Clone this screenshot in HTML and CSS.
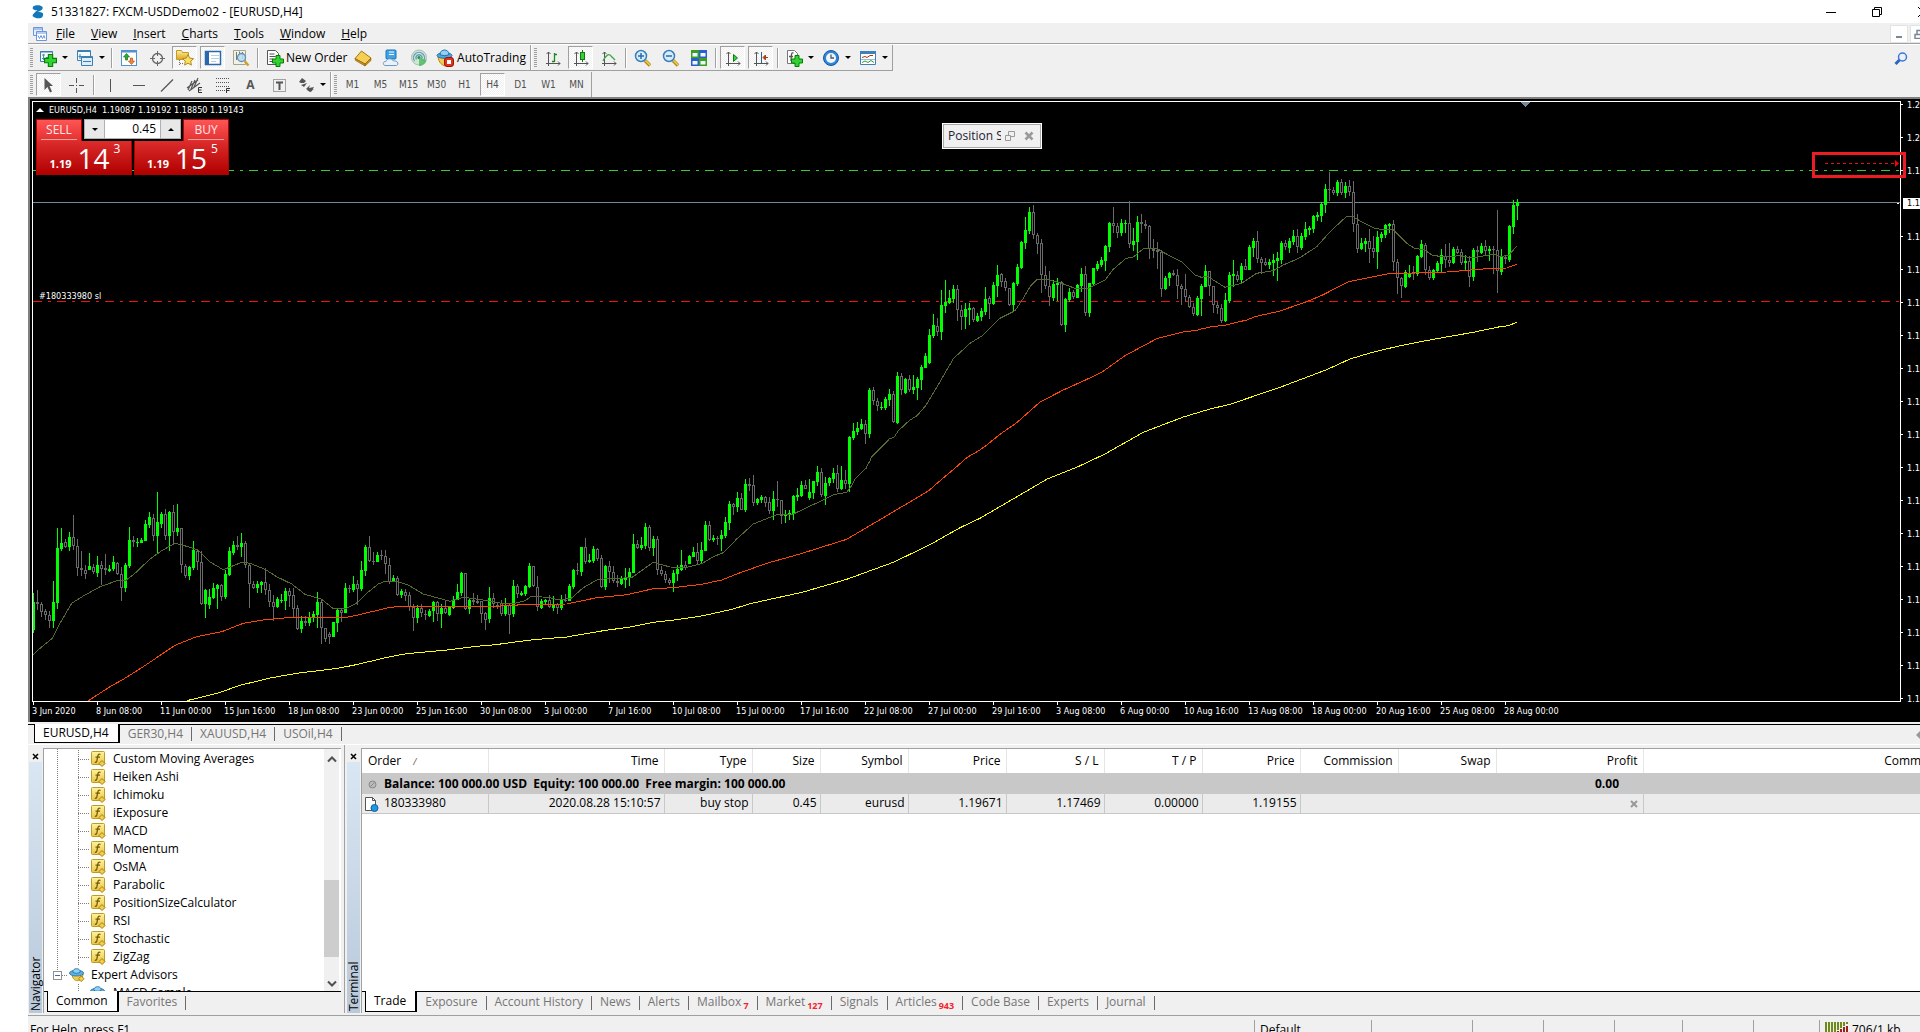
FILE: index.html
```html
<!DOCTYPE html>
<html lang="en">
<head>
<meta charset="utf-8">
<title>51331827: FXCM-USDDemo02 - [EURUSD,H4]</title>
<link rel="stylesheet" href="styles.css">
</head>
<body>
<svg class="defs" aria-hidden="true">
  <defs>
    <linearGradient id="g-gold" x1="0" y1="0" x2="0" y2="1"><stop offset="0" stop-color="#fdf0a0"/><stop offset="1" stop-color="#dba520"/></linearGradient>
    <linearGradient id="g-func" x1="0" y1="0" x2="0" y2="1"><stop offset="0" stop-color="#fdf3a0"/><stop offset="1" stop-color="#e8c548"/></linearGradient>
  </defs>
  <symbol id="plus" viewBox="0 0 12 12"><path d="M4 .5h4V4h3.500v4H8v3.500H4V8H.5V4H4z" fill="#2fd52f" stroke="#0b7a0b"/></symbol>
  <symbol id="func" viewBox="0 0 16 16">
    <rect x="1.500" y=".5" width="13" height="13" rx="1" fill="url(#g-func)" stroke="#c39a1c"/>
    <path d="M10.500 3.500C8.500 2.500 8 4 7.800 5.500L6.800 10c-.3 1.200-1 1.500-2 1M5.500 6.200h4.500" fill="none" stroke="#7a5c00" stroke-width="1.300"/>
    <path d="M12 9.500l3 3-3 3-3-3z" fill="#f2cf4a" stroke="#a87d0a"/>
  </symbol>
  <symbol id="hat" viewBox="0 0 17 16">
    <path d="M3 7c1 5 3 7 6 7s5-2 6-7z" fill="#f0cd50" stroke="#b58b1a"/>
    <ellipse cx="8" cy="6" rx="7.500" ry="3" fill="#5fb0e2" stroke="#2678b0"/>
    <path d="M4 5c0-5 8-5 8 0-2 1.500-6 1.500-8 0z" fill="#8fd0f5" stroke="#2678b0"/>
    <path d="M13 9l3 3-3 3-3-3z" fill="#f2cf4a" stroke="#a87d0a"/>
  </symbol>
</svg>

<div class="app">
  <header class="titlebar">
    <svg class="logo" width="12" height="14" viewBox="0 0 12 14"><path d="M1 1.500C4-.3 9 0 10.500 2 11.500 4 9 6 5.500 7c2.500 0 5 .3 5.500 1.500C11.500 10.500 10.500 12.500 9 13 6 13.800 2.500 13 .5 11 1 8.500 3 7 5.500 5.200 3.500 5.500 1.500 5 .6 3.500z" fill="#1478b8"/></svg>
    <h1 class="title">51331827: FXCM-USDDemo02 - [EURUSD,H4]</h1>
    <div class="wincontrols">
      <button aria-label="Minimize"><svg width="12" height="12"><path d="M1 6.500h10" stroke="#000"/></svg></button>
      <button aria-label="Restore"><svg width="12" height="12"><path d="M1.500 3.500h7v7h-7zM3.500 3V1.500h7v7H9" fill="none" stroke="#000"/></svg></button>
      <button aria-label="Close"><svg width="12" height="12"><path d="M1 1l10 10M11 1L1 11" stroke="#000"/></svg></button>
    </div>
  </header>

  <nav class="menubar">
    <svg class="menuicon" width="14" height="14"><path d="M.5 .5h9v8h-9z" fill="#e6eefb" stroke="#6a96de"/><path d="M.5 2h9" stroke="#6a96de"/><path d="M3.500 4.500h10v9h-10z" fill="#fff" stroke="#6a96de"/><path d="M4 6h9" stroke="#6a96de"/><path d="M5 8.500l1.500 3L8 8.500l1.500 3L11 8.500l1 3" fill="none" stroke="#6a96de"/></svg>
    <button><u>F</u>ile</button><button><u>V</u>iew</button><button><u>I</u>nsert</button><button><u>C</u>harts</button><button><u>T</u>ools</button><button><u>W</u>indow</button><button><u>H</u>elp</button>
    <div class="mdi">
      <button aria-label="Minimize chart"><svg width="10" height="10"><path d="M2 8h6" stroke="#778899" stroke-width="2"/></svg></button>
      <button aria-label="Restore chart"><svg width="10" height="10"><path d="M1 5.500h6v4H1zM3 5V1.500h6v5H7" fill="none" stroke="#778899" stroke-width="1.500"/></svg></button>
      <button aria-label="Close chart"><svg width="10" height="10"><path d="M2 2l6 6M8 2L2 8" stroke="#778899" stroke-width="2"/></svg></button>
    </div>
  </nav>

  <div class="toolbars">
    <div class="toolrow">
      <div class="toolgroup boxed">
        <i class="grip"></i>
        <button class="tool drop" aria-label="New chart"><svg width="18" height="18"><path d="M1.500 2.500h12v10h-12z" fill="#f4fafe" stroke="#3d7fae"/><path d="M1 3h13" stroke="#3d7fae"/><path d="M4.500 5v6M3 6h3M3 9.500h3M7 8.500h3" stroke="#5d88a8"/><use href="#plus" x="5" y="5" width="13" height="13"/></svg><i class="caret"></i></button>
        <button class="tool drop" aria-label="Profiles"><svg width="18" height="18"><path d="M1.500 1.500h13v10h-13z" fill="#f4fafe" stroke="#3d7fae"/><path d="M1 2.500h14M4 5v5M2.500 7.500h5" stroke="#3d7fae"/><path d="M5.500 7.500h11v9h-11z" fill="#dcecf8" stroke="#3d7fae"/><path d="M6 8.500h10M7 12.500h8" stroke="#3d7fae"/></svg><i class="caret"></i></button>
        <i class="sep"></i>
        <button class="tool" aria-label="Market Watch"><svg width="18" height="18"><rect x="1.500" y="1.500" width="15" height="15" fill="#fff" stroke="#4f93cf"/><path d="M1 2.500h16" stroke="#4f93cf" stroke-width="2"/><path d="M6.500 4.500l3 3.500h-2v3h-2V8h-2z" fill="#2bb02b" stroke="#12751a" stroke-width=".7"/><path d="M11.500 15.500l3-3.500h-2V9h-2v3h-2z" fill="#f38a3c" stroke="#c34a10" stroke-width=".7"/></svg></button>
        <button class="tool" aria-label="Data Window"><svg width="18" height="18"><circle cx="9.500" cy="9.500" r="5" fill="none" stroke="#666" stroke-width="1.300"/><path d="M9.500 2v5M9.500 12v5M2 9.500h5M12 9.500h5" stroke="#666"/></svg></button>
        <button class="tool pressed" aria-label="Navigator"><svg width="18" height="18"><path d="M.5 3V1.500h5l1 2h6v7H.5z" fill="url(#g-gold)" stroke="#c59a2a"/><path d="M3.500 11v5M4 14.500h3" stroke="#777" stroke-dasharray="1 1"/><path d="M12 5.500l1.700 3.600 3.800.5-2.800 2.600.7 3.900-3.400-1.900-3.400 1.900.7-3.900-2.800-2.600 3.800-.5z" fill="#f8df68" stroke="#b98a14"/></svg></button>
        <button class="tool pressed" aria-label="Terminal"><svg width="18" height="18"><rect x="1.500" y="2.500" width="15" height="13" fill="#fff" stroke="#2a68ac" stroke-width="1.500"/><path d="M3.500 3v12" stroke="#2a68ac" stroke-width="3"/><path d="M7 6.500h8M7 9.500h8M7 12.500h5" stroke="#b6cfe6"/></svg></button>
        <button class="tool" aria-label="Strategy Tester"><svg width="18" height="18"><path d="M1.500 1.500h12v14h-12z" fill="#f3f0e6" stroke="#a9a28c"/><path d="M4.500 3v8M7.500 2.500v5M10.500 3v7" stroke="#777"/><circle cx="9.500" cy="8.500" r="4" fill="#b9dcf2" fill-opacity=".85" stroke="#5c91b8" stroke-width="1.300"/><path d="M12.500 12l4 4.500" stroke="#cfa030" stroke-width="2.500"/></svg></button>
        <i class="sep"></i>
        <button class="tool wide-order"><svg width="18" height="18"><path d="M1.500 1.500h8l3 3v11h-11z" fill="#fff" stroke="#555"/><path d="M3.500 5h5M3.500 7.500h6M3.500 10h4M3.500 12.500h3" stroke="#555"/><use href="#plus" x="6" y="6" width="12" height="12"/></svg>New Order</button>
        <button class="tool" aria-label="MetaEditor"><svg width="18" height="18"><path d="M1 9.500L7.500 2l9.500 7-6 6z" fill="#f4cf55" stroke="#a67612"/><path d="M1 9.500l10 5.500v2L1.500 11.500zM11 15l6-6v2.500l-6 5.500z" fill="#c98f1d" stroke="#8d620d" stroke-width=".6"/></svg></button>
        <button class="tool" aria-label="Market"><svg width="18" height="18"><rect x="4" y="1" width="10" height="9" rx="1" fill="#41a3e6" stroke="#1d74b6"/><path d="M7 3h5M7 5.500h5" stroke="#fff"/><path d="M3 16.500c-3-1-1.500-4.500 1-4 1-3.500 6-3.500 7.500-.5 4-.8 6 3.500 3 4.500z" fill="#e9f2fb" stroke="#6c9ac8"/></svg></button>
        <button class="tool" aria-label="Signals"><svg width="18" height="18"><circle cx="9" cy="8.500" r="7.500" fill="#cfe6d4" stroke="#9fc5ad"/><path d="M4.500 12a5.500 5.500 0 1 1 9 0M6.500 10.500a3 3 0 1 1 5 0" fill="none" stroke="#6699bb" stroke-width="1.300"/><circle cx="9" cy="8.500" r="1.600" fill="#1a9a3c"/><path d="M9 9v8c4 0 7-2.500 7.500-6" fill="#43b556" fill-opacity=".75"/></svg></button>
        <button class="tool wide-auto"><svg width="18" height="18"><path d="M2 8c1 6 4 8 7 9l7-9z" fill="#f1cb4d" stroke="#b5871a"/><ellipse cx="8.500" cy="6.500" rx="7.500" ry="2.800" fill="#4fa5dd" stroke="#1f70a8"/><path d="M4 5.500c0-6 9-6 9 0-2.500 1.500-6.500 1.500-9 0z" fill="#8fd0f5" stroke="#1f70a8"/><rect x="8.500" y="8.500" width="9" height="9" rx="2.500" fill="#e0331c" stroke="#a01408"/><rect x="11" y="11" width="4" height="4" fill="#fff"/></svg>AutoTrading</button>
      </div>
      <div class="toolgroup boxed">
        <i class="grip"></i>
        <button class="tool" aria-label="Bar chart"><svg width="18" height="18"><path d="M4.500 3v14M2 14.500h14M2.500 5l2-2 2 2M14 12.500l2 2-2 2" fill="none" stroke="#555"/><path d="M10.500 4v9M8 12.500h2.500M10.500 5.500H13" stroke="#1b8a1b" stroke-width="1.300"/></svg></button>
        <button class="tool pressed" aria-label="Candlesticks"><svg width="18" height="18"><path d="M4.500 3v14M2 14.500h14M2.500 5l2-2 2 2M14 12.500l2 2-2 2" fill="none" stroke="#555"/><path d="M10.500 1v12" stroke="#117a11"/><rect x="8.500" y="3.500" width="4" height="7" fill="#35d135" stroke="#117a11"/></svg></button>
        <button class="tool" aria-label="Line chart"><svg width="18" height="18"><path d="M4.500 3v14M2 14.500h14M2.500 5l2-2 2 2M14 12.500l2 2-2 2" fill="none" stroke="#555"/><path d="M3 12c3-6 6-8 8-5l4 4" fill="none" stroke="#3aa545" stroke-width="1.300"/></svg></button>
        <i class="sep"></i>
        <button class="tool" aria-label="Zoom in"><svg width="18" height="18"><path d="M11 11.500l5 5" stroke="#b48a1a" stroke-width="3.500"/><path d="M11 11l5 5" stroke="#f0d050" stroke-width="1.500"/><circle cx="7" cy="7" r="5.500" fill="#d6ecfa" stroke="#3a7fb8" stroke-width="1.500"/><path d="M4 7h6M7 4v6" stroke="#2b6ea8" stroke-width="1.500"/></svg></button>
        <button class="tool" aria-label="Zoom out"><svg width="18" height="18"><path d="M11 11.500l5 5" stroke="#b48a1a" stroke-width="3.500"/><path d="M11 11l5 5" stroke="#f0d050" stroke-width="1.500"/><circle cx="7" cy="7" r="5.500" fill="#d6ecfa" stroke="#3a7fb8" stroke-width="1.500"/><path d="M4 7h6" stroke="#2b6ea8" stroke-width="1.500"/></svg></button>
        <button class="tool" aria-label="Tile windows"><svg width="18" height="18"><path d="M1 1h8v8H1zM9 9h8v8H9z" fill="#3d9e1e"/><path d="M9 1h8v8H9zM1 9h8v8H1z" fill="#2a5fd0"/><path d="M2.500 4h5v3.500h-5zM10.500 4h5v3.500h-5zM2.500 12h5v3.500h-5zM10.500 12h5v3.500h-5z" fill="#eef6ff"/></svg></button>
        <i class="sep"></i>
        <button class="tool pressed" aria-label="Auto scroll"><svg width="18" height="18"><path d="M4.500 3v14M2 14.500h14M2.500 5l2-2 2 2M14 12.500l2 2-2 2" fill="none" stroke="#555"/><path d="M9.500 5.500l4 3.500-4 3.500z" fill="#35d135" stroke="#117a11"/></svg></button>
        <button class="tool pressed" aria-label="Chart shift"><svg width="18" height="18"><path d="M4.500 3v14M2 14.500h14M2.500 5l2-2 2 2M14 12.500l2 2-2 2" fill="none" stroke="#555"/><path d="M9.500 3v11" stroke="#24659c"/><path d="M16 8.500h-4M13.500 6L11 8.500l2.500 2.500z" stroke="#b23c0c" fill="#b23c0c"/></svg></button>
        <i class="sep"></i>
        <button class="tool drop" aria-label="Indicators"><svg width="18" height="18"><path d="M2.500 1.500h7l3 3v10h-10z" fill="#fff" stroke="#777"/><path d="M8.500 4C6 3 6.500 6 6 12M4 7.500h4" fill="none" stroke="#555" stroke-width="1.300"/><use href="#plus" x="6" y="6" width="12" height="12"/></svg><i class="caret"></i></button>
        <button class="tool drop" aria-label="Periods"><svg width="18" height="18"><circle cx="9" cy="9" r="7.500" fill="#2d86d8" stroke="#155a9e"/><circle cx="9" cy="9" r="5" fill="#eef6fd"/><path d="M9 5.500V9h3" fill="none" stroke="#555" stroke-width="1.300"/></svg><i class="caret"></i></button>
        <button class="tool drop" aria-label="Templates"><svg width="18" height="18"><path d="M1.500 2.500h15v13h-15z" fill="#fff" stroke="#3f7fba"/><path d="M1 3.500h16" stroke="#3f7fba" stroke-width="3"/><path d="M3 8.500l3-1 2 1 3-2h3" fill="none" stroke="#a33b10"/><path d="M2 10.500h14" stroke="#9bb9d4"/><path d="M3 13.500l3-1.500 3 1.500 3-2 3 2" fill="none" stroke="#2f9d3b"/></svg><i class="caret"></i></button>
      </div>
      <button class="search" aria-label="Search"><svg width="14" height="14"><circle cx="8.500" cy="5" r="4" fill="#eaf1fb" stroke="#3f78d4" stroke-width="1.500"/><path d="M5.500 8L1.500 12" stroke="#2f62c0" stroke-width="3"/></svg></button>
    </div>
    <div class="toolrow">
      <div class="toolgroup">
        <i class="grip"></i>
        <button class="tool pressed" aria-label="Cursor"><svg width="18" height="18"><path d="M4.500 2v12l3-3 2.500 5.500 2-1L9.500 10H13z" fill="#555"/></svg></button>
        <button class="tool" aria-label="Crosshair"><svg width="18" height="18"><path d="M8.500 2v5M8.500 12v5M1 9.500h5M11 9.500h5" stroke="#555"/><path d="M8 9.500h1" stroke="#555"/></svg></button>
        <i class="sep"></i>
        <button class="tool" aria-label="Vertical line"><svg width="18" height="18"><path d="M8.500 3v13" stroke="#555"/></svg></button>
        <button class="tool" aria-label="Horizontal line"><svg width="18" height="18"><path d="M3 9.500h12" stroke="#555"/></svg></button>
        <button class="tool" aria-label="Trendline"><svg width="18" height="18"><path d="M3 15.500L15 3.500" stroke="#555" stroke-width="1.200"/></svg></button>
        <button class="tool" aria-label="Equidistant channel"><svg width="18" height="18"><path d="M1 12L12 4M3 15L14 7M2 14l4-9M5 13l4-9M8 11l4-9" stroke="#555" stroke-width="1.200"/><path d="M16 11.500h-3.500v5H16M12.500 14H15.500" fill="none" stroke="#333"/></svg></button>
        <button class="tool" aria-label="Fibonacci"><svg width="18" height="18"><path d="M2 2.500h14M2 6.500h14M2 10.500h14M2 14.500h9" stroke="#555" stroke-dasharray="1 1"/><path d="M16 12.500h-3.500V17M12.500 14.500H15.500" fill="none" stroke="#333"/></svg></button>
        <button class="tool glyph" aria-label="Text">A</button>
        <button class="tool" aria-label="Text label"><svg width="18" height="18"><path d="M3.500 3.500h12v12h-12z" fill="none" stroke="#555" stroke-dasharray="1 1"/><path d="M6 6.500h7M9.500 6v8" stroke="#555" stroke-width="2"/></svg></button>
        <button class="tool drop" aria-label="Arrows"><svg width="18" height="18"><path d="M2 6l3-4 4 3-2 2H4zM4 9l3 2 3-4M14 16l3-5-5 1 1-3-4 4z" fill="#555"/><path d="M10 14l3 2 4-3" fill="#555"/></svg><i class="caret"></i></button>
      </div>
      <div class="toolgroup edge">
        <i class="grip"></i>
        <button class="tool tf">M1</button><button class="tool tf">M5</button><button class="tool tf">M15</button><button class="tool tf">M30</button><button class="tool tf">H1</button><button class="tool tf pressed">H4</button><button class="tool tf">D1</button><button class="tool tf">W1</button><button class="tool tf">MN</button>
      </div>
    </div>
  </div>

  <main class="chart">
    <div class="plot">
      <svg class="canvas" id="canvas" role="img" aria-label="EURUSD H4 candlestick chart"></svg>
      <p class="quote"><i class="tri"></i>EURUSD,H4&nbsp; 1.19087 1.19192 1.18850 1.19143</p>
      <div class="oneclick">
        <button class="side sell"><span class="word">SELL</span></button>
        <div class="volume">
          <button aria-label="Decrease volume"><i class="caret"></i></button>
          <input type="text" value="0.45" aria-label="Volume">
          <button aria-label="Increase volume"><i class="caret up"></i></button>
        </div>
        <button class="side buy"><span class="word">BUY</span></button>
        <div class="price"><b>1.19</b><span class="big">14</span><sup>3</sup></div>
        <div class="price"><b>1.19</b><span class="big">15</span><sup>5</sup></div>
      </div>
      <span class="stoplabel">#180333980 sl</span>
      <section class="floatwin">
        <span>Position S</span>
        <button aria-label="Restore panel"><svg width="10" height="10"><path d="M.5 4.500h5v5h-5zM3.500 4V.5h6v5H6" fill="none" stroke="#999"/></svg></button>
        <button aria-label="Close panel"><svg width="10" height="10"><path d="M1.500 1.500l7 7M8.500 1.500l-7 7" stroke="#999" stroke-width="2.500"/></svg></button>
      </section>
    </div>
    <div class="prices" id="prices"></div>
    <div class="dates" id="dates"></div>
    <div class="marker"><svg width="76" height="10"><path d="M0 5.500h69" stroke="#e01010" stroke-dasharray="3 3"/><path d="M70 2l4 3.500-4 3.500z" fill="#f00"/></svg></div>
  </main>

  <nav class="tabs charttabs">
    <button class="tab active">EURUSD,H4</button><button class="tab">GER30,H4</button><button class="tab">XAUUSD,H4</button><button class="tab">USOil,H4</button>
    <svg class="scrollleft" width="4" height="8"><path d="M4 0v8L0 4z" fill="#999"/></svg>
  </nav>

  <div class="dock">
    <section class="pane navigator">
      <div class="rail"><button aria-label="Close Navigator"><svg width="7" height="7"><path d="M1 1l5 5M6 1L1 6" stroke="#000" stroke-width="1.500"/></svg></button><h2>Navigator</h2></div>
      <div class="body">
        <div class="treebox">
          <ul class="tree" id="tree">
            <li>Custom Moving Averages</li><li>Heiken Ashi</li><li>Ichimoku</li><li>iExposure</li><li>MACD</li><li>Momentum</li><li>OsMA</li><li>Parabolic</li><li>PositionSizeCalculator</li><li>RSI</li><li>Stochastic</li><li>ZigZag</li>
            <li class="group">Expert Advisors</li>
            <li class="expert">MACD Sample</li>
          </ul>
          <div class="scroll">
            <svg width="10" height="7"><path d="M1 5.500L5 1.500l4 4" fill="none" stroke="#505050" stroke-width="2"/></svg>
            <i class="thumb"></i>
            <svg width="10" height="7"><path d="M1 1.500l4 4 4-4" fill="none" stroke="#505050" stroke-width="2"/></svg>
          </div>
        </div>
        <nav class="tabs"><button class="tab active">Common</button><button class="tab">Favorites</button></nav>
      </div>
    </section>

    <section class="pane terminal">
      <div class="rail"><button aria-label="Close Terminal"><svg width="7" height="7"><path d="M1 1l5 5M6 1L1 6" stroke="#000" stroke-width="1.500"/></svg></button><h2>Terminal</h2></div>
      <div class="body">
        <div class="tablebox">
          <table>
            <colgroup><col class="c126"><col class="c176"><col class="c88"><col class="c68"><col class="c88"><col class="c98"><col class="c98"><col class="c98"><col class="c98"><col class="c98"><col class="c98"><col class="c147"><col></colgroup>
            <thead><tr><th>Order <i class="sort">/</i></th><th>Time</th><th>Type</th><th>Size</th><th>Symbol</th><th>Price</th><th>S / L</th><th>T / P</th><th>Price</th><th>Commission</th><th>Swap</th><th>Profit</th><th>Comment</th></tr></thead>
            <tbody>
              <tr class="balance"><td colspan="11"><svg width="9" height="9"><circle cx="4.500" cy="4.500" r="3.500" fill="#bbb" stroke="#888"/><path d="M2.500 6.500l4-4" stroke="#888"/></svg>Balance: 100 000.00 USD&nbsp; Equity: 100 000.00&nbsp; Free margin: 100 000.00</td><td>0.00</td><td></td></tr>
              <tr class="order"><td><svg width="15" height="16"><path d="M1.500 1.500h7l3 3v10h-10z" fill="#fff" stroke="#555"/><path d="M8.500 1.500v3h3" fill="none" stroke="#555"/><circle cx="10.500" cy="12" r="3.500" fill="#2196e3" stroke="#0d5fa0"/></svg>180333980</td><td>2020.08.28 15:10:57</td><td>buy stop</td><td>0.45</td><td>eurusd</td><td>1.19671</td><td>1.17469</td><td>0.00000</td><td>1.19155</td><td class="open"></td><td class="open"></td><td><svg width="8" height="8"><path d="M1 1l6 6M7 1L1 7" stroke="#999" stroke-width="2"/></svg></td><td></td></tr>
            </tbody>
          </table>
        </div>
        <nav class="tabs"><button class="tab active">Trade</button><button class="tab">Exposure</button><button class="tab">Account History</button><button class="tab">News</button><button class="tab">Alerts</button><button class="tab">Mailbox<sub>7</sub></button><button class="tab">Market<sub>127</sub></button><button class="tab">Signals</button><button class="tab">Articles<sub>943</sub></button><button class="tab">Code Base</button><button class="tab">Experts</button><button class="tab">Journal</button></nav>
      </div>
    </section>
  </div>

  <footer class="status">
    <span class="help">For Help, press F1</span>
    <span class="w116">Default</span><span class="w101"></span><span class="w71"></span><span class="w71"></span><span class="w68"></span><span class="w71"></span><span class="w66"></span>
    <span class="net"><svg width="24" height="14"><path d="M1 0v14M4 0v14M7 0v12M10 0v10M13 0v8M16 0v6M19 0v4M22 0v2" stroke="#6d8a1a" stroke-width="2"/><path d="M7 14v-1M10 14v-3M13 14V9M16 14V7M19 14V5M22 14V4" stroke="#9a2314" stroke-width="2"/></svg>706/1 kb</span>
  </footer>
</div>
<script src="chart.js"></script>
</body>
</html>
```

FILE: styles.css
```css
* { box-sizing: border-box; }

body {
  margin: 0;
  height: 100vh;
  overflow: hidden;
  background: #fff;
  color: #000;
  font: 12px/16px "Open Sans", "Noto Sans", sans-serif;
}

button, input { font: inherit; color: inherit; margin: 0; padding: 0; border: 0; background: none; }
h1, h2, p, ul { margin: 0; padding: 0; font: inherit; list-style: none; }
svg { flex: none; display: block; }
.defs { position: absolute; width: 0; height: 0; }

/* The window hangs slightly over the right and bottom of the screen. */
.app {
  display: flex;
  flex-direction: column;
  margin-left: 28px;
  width: 100%;
  height: calc(100vh + 8px);
  background: #f0f0f0;
}

/* Title and menu */
.titlebar { display: flex; align-items: center; flex: none; height: 23px; padding-left: 4px; background: #fff; }
.title { margin-left: 7px; flex: 1; }
.wincontrols { display: flex; height: 20px; margin-right: 2px; }
.wincontrols button { width: 46px; display: flex; align-items: center; justify-content: center; }
.menubar { display: flex; align-items: center; flex: none; height: 22px; padding-left: 5px; border-bottom: 1px solid #fff; box-shadow: inset 0 -1px #a0a0a0; }
.menubar > button { padding: 0 8px; }
.menuicon { margin-right: 1px; }
.mdi { display: flex; gap: 2px; margin-left: auto; }
.mdi button { width: 18px; height: 18px; display: flex; align-items: center; justify-content: center; background: #fff; border: 1px solid #e3e3e3; }

/* Toolbars */
.toolbars { flex: none; }
.toolrow { display: flex; height: 27px; }
.toolrow + .toolrow { height: 25px; }
.toolgroup { display: flex; align-items: center; gap: 3px; padding: 0 2px; border-right: 1px solid #a0a0a0; }
.toolgroup + .toolgroup { padding-left: 3px; box-shadow: inset 1px 0 #fff; }
.boxed { border-bottom: 1px solid #a0a0a0; height: 26px; }
.grip { width: 3px; height: 19px; background: repeating-linear-gradient(#a0a0a0 0 1px, #f0f0f0 1px 2px); }
.sep { width: 3px; height: 20px; display: flex; border-right: 1px solid #fff; box-shadow: inset -1px 0 #a0a0a0; }
.tool { width: 25px; height: 23px; display: flex; align-items: center; justify-content: center; }
.pressed { border: 1px solid #fff; border-top-color: #a0a0a0; border-left-color: #a0a0a0; background: repeating-conic-gradient(#fff 0 25%, #f0f0f0 0 50%) 0 0 / 2px 2px; }
.drop { width: 34px; gap: 5px; }
.caret { border: 3px solid transparent; border-top-color: #000; border-bottom: 0; }
.caret.up { border-bottom: 3px solid #000; border-top: 0; }
.wide-order { width: 85px; justify-content: flex-start; padding-left: 4px; gap: 2px; white-space: nowrap; }
.wide-auto { width: 94px; gap: 3px; white-space: nowrap; }
.tf { font: 10px/12px "DejaVu Sans Condensed", "DejaVu Sans", sans-serif; color: #505050; }
.glyph { font-weight: 700; color: #555; }
.search { margin: 0 40px 0 auto; }

/* Chart */
.chart {
  position: relative;
  flex: 1;
  min-height: 0;
  display: grid;
  grid-template-columns: 1fr 47px;
  grid-template-rows: 1fr 20px;
  padding: 2px 0 0 2px;
  background: #000;
  color: #fff;
  border: solid #808080;
  border-width: 2px 0 0 2px;
  font: 9px/12px "DejaVu Sans Condensed", "DejaVu Sans", sans-serif;
}
.plot { position: relative; border: 1px solid #fff; overflow: hidden; }
.canvas { width: 100%; height: 100%; shape-rendering: crispEdges; }
.prices { position: relative; }
.dates { position: relative; grid-column: 1 / -1; }
.prices span, .dates span { position: absolute; white-space: nowrap; }
.prices span { left: 6px; transform: translateY(-6px); }
.prices span::before { content: ""; position: absolute; left: -6px; top: 5px; width: 2px; height: 1px; background: #fff; }
.prices .now { left: 2px; padding: 0 4px; background: #fff; color: #000; line-height: 11px; }
.dates span { top: 3px; }
.dates span::before { content: ""; position: absolute; left: 1px; top: -3px; width: 1px; height: 3px; background: #fff; }
.quote { position: absolute; left: 3px; top: 2px; display: flex; align-items: center; gap: 5px; white-space: pre; }
.tri { border: 4px solid transparent; border-top: 0; border-bottom-color: #fff; }
.stoplabel { position: absolute; left: 6px; top: 188px; }
.marker { position: absolute; right: 42px; top: 53px; width: 94px; height: 26px; border: 3px solid #ed1c24; padding: 3px 0 0 10px; }

.oneclick {
  position: absolute;
  left: 3px;
  top: 17px;
  display: grid;
  grid-template-columns: 46px 50px 2px 49px 46px;
  grid-template-rows: 22px 34px;
  font: 12px/16px "Open Sans", sans-serif;
}
.side { background: linear-gradient(#ff5555, #e23030); border: 1px solid #b00000; border-bottom: 0; color: #ffe8e8; }
.word { display: block; margin: 0 4px; border-bottom: 1px solid #f3a0a0; padding-bottom: 1px; }
.volume { grid-column: 2 / 5; justify-self: center; display: flex; height: 20px; width: 97px; border: 1px solid #b0b0b0; background: #fff; color: #000; }
.volume button { width: 19px; background: #e8e8e8; display: flex; align-items: center; justify-content: center; }
.volume input { flex: 1; min-width: 0; text-align: right; padding-right: 4px; border: solid #b0b0b0; border-width: 0 1px; }
.price { grid-column: 1 / 3; display: flex; align-items: flex-end; justify-content: center; gap: 6px; padding: 0 8px 1px 10px; border: 1px solid #b00000; border-top: 0; background: linear-gradient(#dc2c2c, #b00000); }
.price + .price { grid-column: 4 / 6; }
.price b { font-size: 11px; padding-bottom: 1px; }
.big { font: 28px/30px "Open Sans", sans-serif; }
.price sup { align-self: flex-start; font: 12px/16px "Open Sans", sans-serif; margin-left: -2px; }

.floatwin { position: absolute; left: 909px; top: 21px; width: 100px; height: 26px; display: flex; align-items: center; border: 1px solid #fff; box-shadow: inset 0 0 0 1px #a9a9a9; background: #f0f0f0; color: #223; padding: 0 6px 0 5px; font: 12px/16px "Open Sans", sans-serif; }
.floatwin span { width: 53px; overflow: hidden; white-space: nowrap; }
.floatwin button { margin-left: 4px; }
.floatwin button + button { margin-left: 9px; }

/* Tabs */
.tabs { display: flex; align-items: flex-start; flex: none; height: 22px; padding-left: 3px; background: linear-gradient(#000, #000) 0 0 / 100% 1px no-repeat #f0f0f0; }
.tab { display: flex; align-items: center; height: 21px; padding: 0 9px 0 8px; color: #757575; white-space: nowrap; background: linear-gradient(#6a6a6a, #6a6a6a) 100% 5px / 1px 14px no-repeat; }
.tab.active { color: #000; background: #fff; border: 1px solid #000; border-top: 0; border-right-width: 2px; }
.tab sub { align-self: flex-end; color: #f5222d; font: 700 9px/12px "Open Sans", sans-serif; margin-left: 2px; }
.charttabs { height: 20px; padding-left: 6px; margin-top: 2px; }
.charttabs .tab { height: 19px; background-position: 100% 3px; }
.scrollleft { margin: 7px 28px 0 auto; }

/* Docked panes */
.dock { display: flex; flex: none; height: 272px; border-top: 1px solid #fff; border-bottom: 1px solid #a0a0a0; padding-bottom: 2px; }
.pane { display: flex; padding-top: 3px; }
.navigator { width: 317px; border-right: 1px solid #a0a0a0; padding-right: 3px; }
.terminal { flex: 1; min-width: 0; padding-left: 1px; }
.rail { width: 15px; flex: none; display: flex; flex-direction: column; align-items: center; padding: 2px 1px 0; }
.rail button { height: 12px; margin-right: 1px; }
.rail h2 { flex: 1; width: 13px; writing-mode: vertical-rl; transform: rotate(180deg); line-height: 13px; padding-top: 2px; background: linear-gradient(#b9c9da, #d9e6f3); }
.body { flex: 1; min-width: 0; display: flex; flex-direction: column; border: solid #a0a0a0; border-width: 1px 0 0 1px; }
.treebox, .tablebox { flex: 1; min-height: 0; overflow: hidden; background: #fff; display: flex; }
.tree { flex: 1; padding-top: 1px; background: repeating-linear-gradient(#808080 0 1px, transparent 1px 2px) 13px 0 / 1px 226px no-repeat; }
.tree li { height: 18px; line-height: 18px; display: flex; align-items: center; gap: 7px; padding-left: 34px; background: repeating-linear-gradient(#808080 0 1px, transparent 1px 2px) 34px 0 / 1px 100% no-repeat; white-space: nowrap; }
.tree li::before { content: ""; width: 12px; height: 1px; background: repeating-linear-gradient(90deg, #808080 0 1px, transparent 1px 2px); margin-right: -7px; }
.tree li.group { padding-left: 9px; background: none; gap: 6px; }
.tree li.group::before { display: none; }
.tree .leader { width: 5px; height: 1px; background: repeating-linear-gradient(90deg, #808080 0 1px, transparent 1px 2px); margin: 0 -4px 0 -6px; }
.scroll { width: 15px; background: #f0f0f0; display: flex; flex-direction: column; align-items: center; padding: 7px 0 4px; margin-right: 2px; }
.thumb { width: 15px; height: 77px; margin: auto 0 23px; background: #cdcdcd; }

table { width: 100%; table-layout: fixed; border-collapse: collapse; align-self: flex-start; }
.c126 { width: 126px; } .c176 { width: 176px; } .c88 { width: 88px; } .c68 { width: 68px; } .c98 { width: 98px; } .c147 { width: 147px; }
th, td { padding: 0 3px 0 0; text-align: right; font-weight: 400; white-space: nowrap; }
th { height: 24px; padding-right: 5px; border-right: 1px solid #e5e5e5; }
th:first-child, td:first-child { text-align: left; padding-left: 6px; }
th:last-child { padding-right: 8px; border: 0; }
.sort { margin-left: 9px; font-size: 9px; color: #555; }
.balance td { height: 21px; background: #c8c8c8; font-weight: 700; padding-right: 24px; }
.order td { height: 19px; background: #ebebeb; border: solid #c8c8c8; border-width: 0 1px 1px 0; }
.order td.open { border-right: 0; }
td svg { display: inline-block; vertical-align: middle; }
.order td:first-child { padding-left: 2px; }
.order td:first-child svg { margin-right: 5px; }
.balance svg { margin-right: 7px; }
.order td:nth-child(12) { padding-right: 5px; }

/* Status bar */
.status { display: flex; flex: none; height: 24px; padding-top: 4px; white-space: nowrap; }
.status span { border-left: 1px solid #a0a0a0; padding: 2px 0 0 5px; }
.status .help { flex: 1; border: 0; padding-left: 2px; }
.w116 { width: 117px; } .w101 { width: 101px; } .w71 { width: 71px; } .w68 { width: 68px; } .w66 { width: 66px; }
.status .net { width: 129px; display: flex; gap: 3px; }
```

FILE: chart.js
```js
// Each section holds three units per pixel, measured from its own origin (x, y).
// A bar is "<sign> high top bottom low"; + closes up, - closes down.
const SECTIONS = [
  { x: -13, y: 338,
    bars: "+460 486 569 578|-450 487 492 510|-487 493 515 530|-507 514 526 540|-512 526 542 564|+423 486 542 563|+264 324 488 507|+264 310 326 332|-297 307 320 325|+276 291 320 333|-225 291 319 330|-297 319 385 407|-333 385 391 407|-375 391 403 416|+339 378 389 389|-372 380 397 403|+348 375 398 410|-363 375 386 434|-342 385 391 404|+375 387 393 396|+348 366 387 393|-366 368 402 405|-381 402 445 482|+369 375 444 456|+261 300 377 384|-288 301 307 320|+294 306 309 320|+294 300 308 309|+240 252 302 304|+216 231 254 264|-222 234 287 302|+156 246 287 339|+216 222 252 264|-207 223 287 299|+213 216 288 332|-195 217 275 312|+192 264 275 287|-265 265 376 399|-372 378 407 413|+378 381 408 420|+303 329 384 390|-327 332 367 390|-333 367 491 495|+447 450 491 534|+447 471 494 507|+430 444 473 476|+432 435 446 507|-433 436 470 483|+390 402 471 476|+321 333 405 407|+303 316 339 344|-288 316 321 330|+279 309 321 351|-303 310 374 384|-369 374 433 503|-423 433 443 446|+423 432 445 458|+423 426 434 458|-384 427 451 464|-432 451 487 500|-465 486 500 542|+471 477 500 503|+462 480 483 489|+444 453 483 510|-445 453 468 500|-444 466 506 531|-495 504 566 570|+528 543 567 579|-528 542 549 557|+516 531 549 558|+514 522 534 546|+456 486 525 564|-478 486 565 611|-564 565 597 606|-576 583 590 611|+545 546 590 591|+507 510 548 576|-504 510 518 547|+429 444 518 519|-434 444 447 458|+407 432 450 456|-420 433 446 494|+363 390 447 452|+315 321 393 408|-288 321 362 366|-336 362 366 375|+336 345 366 367|-330 345 349 360|-330 348 373 401|-353 374 426 431|+405 414 425 425|-407 414 464 468|+447 453 465 474|-447 456 467 482|-457 466 502 514|-492 502 533 572|+494 504 534 549|-492 504 520 530|-510 521 525 540|+507 513 528 531|+483 485 512 545|-483 485 521 543|+492 504 522 564|-480 503 518 523|+500 501 525 527|+468 480 504 506|+432 456 480 480|+396 399 459 467|-400 400 506 510|+476 480 507 522|-459 481 485 494|-465 483 488 492|-483 484 521 548|-516 519 539 569|+441 474 536 549|-458 474 493 504|-486 494 500 507",
    fast: "40,644 60,625 97,595 120,550 155,490 190,468 240,440 295,421 318,421 345,400 390,357 425,332 465,310 490,316 535,330 570,366 610,389 665,367 690,370 735,388 770,410 815,432 855,463 905,478 940,506 975,507 1010,489 1040,460 1075,432 1095,424 1130,424 1165,435 1210,462 1290,484 1330,472 1390,480 1440,489",
    mid: "205,782 270,740 310,718 370,680 465,616 530,590 605,575 670,550 730,540 800,533 900,532 970,534 1010,526 1110,502 1150,499 1250,501 1440,499",
    slow: "500,782 595,759 660,736 755,713 830,700 945,686 1000,676 1110,650 1160,641 1280,630 1370,619 1440,613" },
  { x: 467, y: 338,
    bars: "-480 489 521 527|+474 495 521 527|-492 495 524 581|+420 438 521 530|-432 438 463 475|+453 459 464 469|+435 438 461 467|+369 378 440 443|-378 379 438 440|-408 440 502 512|+478 484 503 507|+476 480 486 491|-465 480 502 503|+468 492 503 513|-488 492 503 521|+465 480 503 510|-462 480 484 485|+432 438 483 483|+387 390 440 446|-369 390 394 404|+320 321 395 408|-294 322 365 372|+342 360 366 369|+318 327 362 369|-324 328 356 363|-345 355 440 444|+375 378 440 450|-363 378 395 428|-378 395 424 430|-404 424 430 440|+408 416 432 435|+384 411 420 443|+384 396 414 437|+282 312 398 399|-300 313 323 327|+291 315 323 330|+249 261 318 327|-255 260 323 332|+288 297 323 347|-288 297 391 404|-378 391 403 407|-392 403 419 428|-414 419 428 434|+390 399 428 455|+375 387 401 423|+330 375 389 393|-363 375 383 389|+345 348 371 372|+321 336 350 351|-309 336 362 371|+306 330 363 371|+243 255 332 333|-243 256 299 303|+285 294 300 305|-288 294 297 315|+270 285 297 332|+231 246 287 293|+183 192 248 270|-189 192 200 224|+156 174 201 216|-159 174 209 210|+117 132 210 215|-114 132 137 154|-105 136 189 198|+174 177 188 195|+165 171 180 189|-168 172 188 200|-171 187 212 223|+153 177 212 240|-123 177 181 201|-180 181 228 251|+210 224 228 248|+210 219 226 239|+165 168 221 240|+144 165 170 183|+123 135 168 170|-120 136 146 147|+117 156 174 180|+123 123 159 177|+78 96 126 138|-84 97 166 171|+111 129 168 195|+111 114 128 138|+84 99 116 128|-75 100 146 157|+78 120 147 150|-90 120 131 147|+-12 -9 131 156",
    fast: "0,490 40,491 75,482 95,468 150,473 175,480 215,474 250,443 290,420 320,416 395,413 420,395 460,367 510,381 560,382 605,371 640,350 670,338 710,297 760,252 830,224 880,222 935,196 970,180 1000,164 1040,157 1055,137 1098,85 1110,62 1163,3",
    mid: "0,498 90,493 200,492 290,473 380,464 460,446 520,443 605,433 665,420 710,402 800,370 900,342 1040,298 1150,233 1285,153 1370,80 1440,30",
    slow: "0,612 100,599 200,591 310,572 390,561 460,547 530,539 610,527 700,507 750,491 910,456 1040,418 1180,367 1290,314 1380,263 1440,235" },
  { x: 767, y: 88,
    bars: "+699 723 743 750|+696 714 725 735|+687 702 717 720|-690 702 731 761|+594 600 732 744|-591 600 634 646|-624 634 649 662|+636 651 654 660|+621 627 654 660|+597 612 630 648|-603 612 697 698|+546 558 699 702|-549 558 601 615|+564 567 608 612|-555 568 599 606|+555 591 600 612|+561 567 594 630|+525 531 570 600|+489 498 534 534|+417 435 519 522|+372 405 437 444|-384 408 425 437|+300 345 426 450|+270 336 348 369|+300 324 339 342|+285 297 327 339|-285 297 361 392|-345 361 380 420|+339 357 381 417|+339 354 359 405|-352 355 389 396|+369 378 393 396|+354 363 380 393|+291 327 366 375|-318 325 341 386|+276 285 342 345|+225 255 287 321|-249 253 275 291|-264 274 295 303|-294 295 344 347|+276 279 345 363|+222 231 282 288|+153 156 234 237|+81 120 158 176|+51 66 123 132|-45 67 136 147|-129 136 163 192|-147 160 255 308|-228 256 289 297|-243 289 322 347|+270 282 323 333|+264 279 285 333|-273 276 404 407|+324 327 405 426|+294 306 330 335|-300 307 322 326|+282 285 323 324|+234 252 288 306|-228 253 368 378|+279 279 369 381|+234 234 282 285|+213 222 237 243|+201 210 225 231|+165 168 213 243|+96 99 170 186|-51 99 108 129|-99 108 128 144|+87 99 129 138|+90 99 101 128|-33 100 163 174|+114 153 164 183|+78 96 156 210|-72 97 103 129|-90 103 109 117|-106 108 178 207|-147 178 182 204|-156 181 185 237|-180 185 296 321|+258 264 298 300|+246 249 263 289|-240 249 256 258|-237 256 289 327|-282 289 297 345|-252 297 322 336|-315 322 350 354|-339 350 373 378|+318 324 374 378|+282 288 327 378",
    fast: "165,868 198,833 215,800 268,746 282,742 295,722 330,690 350,678 378,646 420,575 460,506 510,460 550,435 600,385 645,362 668,328 690,290 712,268 740,268 780,278 825,295 865,295 915,270 940,238 978,205 1000,201 1030,176 1070,175 1095,190 1145,215 1185,255 1200,260",
    mid: "425,868 500,803 560,765 600,733 650,698 720,636 790,600 850,573 905,547 975,497 1070,446 1150,426 1190,421",
    slow: "740,868 830,832 915,792 1030,727 1150,681 1230,657 1290,643 1440,592" },
  { x: 1167, y: 48,
    bars: "+345 363 410 411|-363 364 409 438|-408 409 466 489|-456 466 475 491|-462 475 512 519|+429 450 513 516|+366 375 453 459|+330 372 377 411|-363 375 389 395|+339 348 390 402|-327 349 359 360|+285 291 360 360|+264 273 294 321|-243 274 328 339|-321 327 338 371|-324 337 344 348|+327 336 346 357|+312 330 339 378|+306 324 333 393|+273 279 330 341|-270 279 290 300|+264 273 294 309|+240 258 276 285|-237 259 292 309|+249 258 294 300|+216 237 261 270|+228 234 240 255|+195 198 237 249|+186 195 201 213|+156 162 198 216|+102 117 164 189|-66 117 119 153|-111 119 128 135|+90 96 129 138|-87 97 128 135|+96 108 129 144|-90 108 127 138|-93 127 223 246|-192 222 296 309|+264 279 297 300|+264 273 282 306|-237 274 296 339|-258 295 305 324|+243 261 306 357|+246 252 263 276|+222 225 254 264|+219 222 228 249|-210 223 337 363|-327 337 385 432|-381 385 409 444|+360 366 411 414|+345 369 381 384|-348 368 372 390|+315 318 371 377|+270 282 321 324|-279 286 360 375|-348 361 383 390|+357 360 384 390|+333 339 363 366|+297 315 341 366|-282 317 331 353|-279 330 338 351|+291 297 339 342|-288 297 308 312|-297 307 338 345|+315 333 339 360|-318 333 380 411|+294 300 381 393|-288 301 307 335|+279 288 309 312|-270 288 303 318|+288 297 303 333|-288 297 301 372|-180 300 364 429|+297 321 366 375|-316 322 328 342|+225 228 330 336|+150 165 231 252|+147 156 168 210",
    fast: "0,383 20,378 45,393 75,412 125,400 170,370 220,362 250,345 300,323 350,290 390,245 440,199 460,200 480,213 525,236 580,240 620,280 645,296 670,298 700,317 740,320 780,317 815,324 880,313 900,319 925,317 950,289",
    mid: "0,538 40,529 70,527 140,510 165,500 240,483 320,455 370,434 445,395 490,386 565,371 740,366 850,357 920,354 950,343",
    slow: "380,659 450,627 510,609 600,587 700,568 820,547 900,530 925,527 950,517" }
];

const UP = "#00ff00";
const DOWN = "#696969";
const STEP = 4;

const parts = [];
const rect = (x, y, w, h, fill) => parts.push(`<rect x="${x}" y="${y}" width="${w}" height="${h}" fill="${fill}"/>`);
const rule = (y, stroke, dash) => parts.push(`<line x1="0" x2="100%" y1="${y + 0.5}" y2="${y + 0.5}" stroke="${stroke}"${dash ? ' stroke-dasharray="9 6 3 6"' : ""}/>`);

rule(68, "#32cd32", true);
rule(100, "#778899", false);
rule(199, "#f01010", true);

let index = 0;
for (const section of SECTIONS) {
  for (const bar of section.bars.split("|")) {
    const up = bar[0] === "+";
    const [high, top, bottom, low] = bar.slice(1).split(" ").map(v => section.y + Math.round(v / 3));
    const x = STEP * index++;
    const bodyHeight = Math.max(1, bottom - top);
    rect(x, high, 1, Math.max(1, low - high), up ? UP : DOWN);
    rect(x - 1, top, 3, bodyHeight, up ? UP : DOWN);
    if (!up && bodyHeight > 2) rect(x, top + 1, 1, bodyHeight - 2, "#000");
  }
}

const curve = (key, stroke) => {
  const points = SECTIONS.flatMap(s => s[key].split(" ").map(p => {
    const [x, y] = p.split(",").map(Number);
    return [s.x + x / 3, s.y + y / 3];
  })).sort((a, b) => a[0] - b[0]).map(p => p.map(v => v.toFixed(1)).join(","));
  parts.push(`<polyline points="${points.join(" ")}" fill="none" stroke="${stroke}"/>`);
};
curve("fast", "#556b2f");
curve("mid", "#ff4500");
curve("slow", "#ffff00");

parts.push('<path d="M1487 0h10l-5 5z" fill="#778899"/>');
document.getElementById("canvas").innerHTML = parts.join("");

const PRICES = ["1.20775", "1.20220", "1.19670", "1.19143", "1.18565", "1.18015", "1.17460", "1.16910", "1.16355", "1.15805", "1.15250", "1.14700", "1.14150", "1.13595", "1.13045", "1.12490", "1.11940", "1.11385", "1.10835"];
document.getElementById("prices").innerHTML = PRICES
  .map((p, i) => `<span${i === 3 ? ' class="now"' : ""} style="top:${4 + 33 * i}px">${p}</span>`).join("");

const DATES = ["3 Jun 2020", "8 Jun 08:00", "11 Jun 00:00", "15 Jun 16:00", "18 Jun 08:00", "23 Jun 00:00", "25 Jun 16:00", "30 Jun 08:00", "3 Jul 00:00", "7 Jul 16:00", "10 Jul 08:00", "15 Jul 00:00", "17 Jul 16:00", "22 Jul 08:00", "27 Jul 00:00", "29 Jul 16:00", "3 Aug 08:00", "6 Aug 00:00", "10 Aug 16:00", "13 Aug 08:00", "18 Aug 00:00", "20 Aug 16:00", "25 Aug 08:00", "28 Aug 00:00"];
document.getElementById("dates").innerHTML = DATES
  .map((d, i) => `<span style="left:${64 * i}px">${d}</span>`).join("");

// Put the matching icon in front of every tree entry.
for (const item of document.querySelectorAll("#tree li")) {
  const text = item.textContent;
  const group = item.classList.contains("group");
  const icon = group || item.classList.contains("expert") ? "hat" : "func";
  const box = '<svg width="9" height="9"><rect x=".5" y=".5" width="8" height="8" fill="#fff" stroke="#919191"/><path d="M2 4.500h5" stroke="#4b63a7"/></svg><i class="leader"></i>';
  item.innerHTML = `${group ? box : ""}<svg width="16" height="16"><use href="#${icon}"/></svg><span>${text}</span>`;
}
```
